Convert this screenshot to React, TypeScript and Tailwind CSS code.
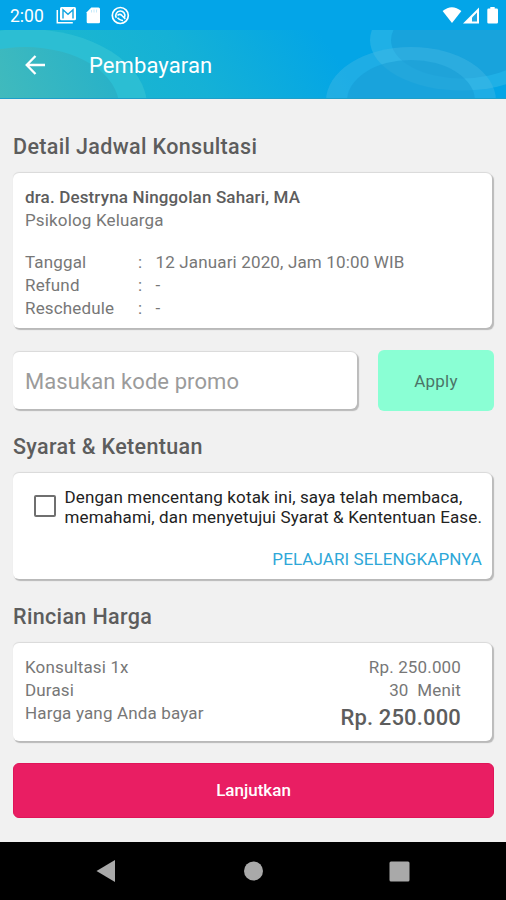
import type { ReactNode } from 'react';

const schedule = [
  { label: 'Tanggal', value: '12 Januari 2020, Jam 10:00 WIB' },
  { label: 'Refund', value: '-' },
  { label: 'Reschedule', value: '-' },
];

function HeaderPattern() {
  return (
    <svg className="absolute inset-0" width="506" height="99" viewBox="0 0 506 99" fill="none">
      <defs>
        <linearGradient id="sky" x1="90" y1="110" x2="285" y2="-20" gradientUnits="userSpaceOnUse">
          <stop offset="0" stopColor="#1cb7cf" />
          <stop offset="0.45" stopColor="#15b1d6" />
          <stop offset="1" stopColor="#03a5e6" />
        </linearGradient>
        <linearGradient id="teal" x1="0" y1="95" x2="110" y2="50" gradientUnits="userSpaceOnUse">
          <stop offset="0" stopColor="#40babd" />
          <stop offset="1" stopColor="#27b1c9" />
        </linearGradient>
        <clipPath id="bar">
          <rect y="30" width="506" height="69" />
        </clipPath>
      </defs>
      <rect width="506" height="99" fill="#03a5e8" />
      <rect y="30" width="506" height="69" fill="url(#sky)" />
      <g clipPath="url(#bar)">
        <ellipse cx="25" cy="106" rx="122" ry="77" fill="#2fc0d4" fillOpacity="0.85" />
        <ellipse cx="25" cy="106" rx="94" ry="59" fill="url(#teal)" />
        <ellipse cx="462" cy="40" rx="92" ry="50.5" fill="#1fb0e6" />
        <ellipse cx="462" cy="40" rx="71" ry="38.5" fill="#18a3dc" />
        <ellipse cx="411" cy="101" rx="85" ry="54" fill="#4bbbe6" fillOpacity="0.38" />
        <ellipse cx="411" cy="101" rx="64" ry="41" fill="#1499d3" fillOpacity="0.5" />
      </g>
      <rect y="98" width="506" height="1" fill="#1d9fca" />
    </svg>
  );
}

function StatusBar() {
  return (
    <div className="relative flex h-[30px] items-center pr-2 pl-[10px] text-white">
      <span className="mt-[3px] w-[46px] text-[17.5px] leading-none">2:00</span>
      <svg width="76" height="30" viewBox="56 0 76 30" fill="none">
        <path d="M57.3 10v12.7h15.5" stroke="#fff" strokeWidth="1.5" />
        <rect x="60" y="7" width="16" height="13.2" rx="1.5" fill="#fff" />
        <path d="M63 18.5V9.8l5 4.4 5-4.4v8.7" stroke="#0fa4e0" strokeWidth="1.4" />
        <path d="M91.3 7.5h7.2q1.5 0 1.5 1.5v13q0 1.3-1.3 1.3H88q-1.3 0-1.3-1.3v-9.8z" fill="#fff" />
        <path d="M91.5 10v2.5M94 9.5v3M96.5 9.5v3" stroke="#b5e3f8" strokeWidth="0.8" />
        <circle cx="120.3" cy="15.5" r="8" stroke="#fff" strokeWidth="1.7" />
        <path d="M116.3 17.8a4.6 4.6 0 1 1 8.2-.3" stroke="#fff" strokeWidth="1.6" />
        <path d="M117.5 15.3q2.6-1.8 4.4.2l3.4 3.4M117.5 17.8q2.5 3 5.5 2.6" stroke="#fff" strokeWidth="1.6" />
      </svg>
      <svg className="ml-auto" width="58" height="30" viewBox="440 0 58 30">
        <path d="M442.6 11q9.2-7.6 18.8 0L452 23z" fill="#fff" />
        <path d="M479 7.5v16h-16z" fill="#fff" />
        <path d="M477 12.5v9h-5v-4z" fill="#20a9e4" />
        <path d="M490.3 7h4.4v1.6h2q1.3 0 1.3 1.3v12.3q0 1.3-1.3 1.3h-8.1q-1.3 0-1.3-1.3V9.9q0-1.3 1.3-1.3h1.7z" fill="#fff" />
      </svg>
    </div>
  );
}

function Card({ className, children }: { className: string; children: ReactNode }) {
  return (
    <div className={`rounded-[6px] bg-white shadow-[0_-1px_1px_#d9d9d9,1.5px_1.5px_1px_#b9b9b9] ${className}`}>
      {children}
    </div>
  );
}

function Title({ children }: { children: ReactNode }) {
  return <h2 className="text-[21.5px] leading-[26px] font-medium tracking-[0.35px] text-[#5d5d5d]">{children}</h2>;
}

export default function App() {
  return (
    <div className="flex h-[900px] w-[506px] flex-col overflow-hidden bg-[#f1f1f1] font-['Roboto',sans-serif] text-[17px] leading-[23.2px] text-[#777]">
      <header className="relative h-[99px] shrink-0">
        <HeaderPattern />
        <StatusBar />
        <div className="relative flex h-[69px] items-center pl-[25px] text-white">
          <svg width="21" height="20" viewBox="0 0 21 20" fill="none" stroke="#fff" strokeWidth="2.3">
            <path d="M20 10H2.5M10.5 1 1.7 10l8.8 9" />
          </svg>
          <h1 className="mt-[2px] ml-[43px] text-[22px] leading-[26px] tracking-[0.1px]">Pembayaran</h1>
        </div>
      </header>

      <main className="flex-1 pt-[35px] pr-[12px] pl-[13px]">
        <Title>Detail Jadwal Konsultasi</Title>
        <Card className="mt-[13px] mr-[2px] h-[155px] px-3 pt-[12.5px] tracking-[0.15px]">
          <p className="font-medium text-[#5d5d5d]">dra. Destryna Ninggolan Sahari, MA</p>
          <p>Psikolog Keluarga</p>
          <dl className="mt-[19px]">
            {schedule.map(row => (
              <div key={row.label} className="flex">
                <dt className="w-[113px]">{row.label}</dt>
                <dd className="w-[17.5px]">:</dd>
                <dd>{row.value}</dd>
              </div>
            ))}
          </dl>
        </Card>

        <div className="mt-[22px] flex h-[61px] justify-between">
          <Card className="mt-[2px] flex h-[57px] w-[344px] items-center px-3">
            <input
              className="mt-[2px] w-full text-[22px] tracking-[0.08px] outline-none placeholder:text-[#9b9b9b]"
              placeholder="Masukan kode promo"
            />
          </Card>
          <button className="w-[116px] rounded-[6px] bg-[#8affd4] pt-[2px] tracking-[0.2px] text-[#4c7568]">Apply</button>
        </div>

        <div className="mt-[23px]">
          <Title>Syarat &amp; Ketentuan</Title>
        </div>
        <Card className="mt-[13px] mr-[2px] flex h-[106px] flex-col pt-[14px] pr-[10px] pl-[20.5px]">
          <label className="flex text-[17px] leading-[20px] tracking-[0.13px] text-[#222]">
            <span className="mt-[8px] mr-[9px] size-[22px] shrink-0 rounded-[2px] border-2 border-[#6f6f6f]" />
            <span className="whitespace-nowrap">
              Dengan mencentang kotak ini, saya telah membaca,
              <br />
              memahami, dan menyetujui Syarat &amp; Kententuan Ease.
            </span>
          </label>
          <a className="mt-[21px] self-end tracking-[0.1px] text-[#2ea7d8]">PELAJARI SELENGKAPNYA</a>
        </Card>

        <div className="mt-[25px]">
          <Title>Rincian Harga</Title>
        </div>
        <Card className="mt-[13px] mr-[2px] flex h-[98px] justify-between pt-[13px] pr-[31px] pl-3 tracking-[0.15px]">
          <div>
            <p>Konsultasi 1x</p>
            <p>Durasi</p>
            <p>Harga yang Anda bayar</p>
          </div>
          <div className="text-right">
            <p>Rp. 250.000</p>
            <p className="whitespace-pre">30  Menit</p>
            <p className="mt-[4px] text-[22px] font-medium text-[#5d5d5d]">Rp. 250.000</p>
          </div>
        </Card>

        <button className="mt-[22px] h-[55px] w-full rounded-[6px] border border-[#df1659] bg-[#e91e63] pt-px font-medium text-white">
          Lanjutkan
        </button>
      </main>

      <nav className="h-[58px] shrink-0 bg-black">
        <svg width="506" height="58" viewBox="0 842 506 58" fill="#a9a9a9">
          <path d="M115 860v22L96.5 871z" />
          <circle cx="253.5" cy="871" r="9.5" />
          <rect x="389.5" y="861.5" width="20" height="20" rx="1.5" />
        </svg>
      </nav>
    </div>
  );
}
